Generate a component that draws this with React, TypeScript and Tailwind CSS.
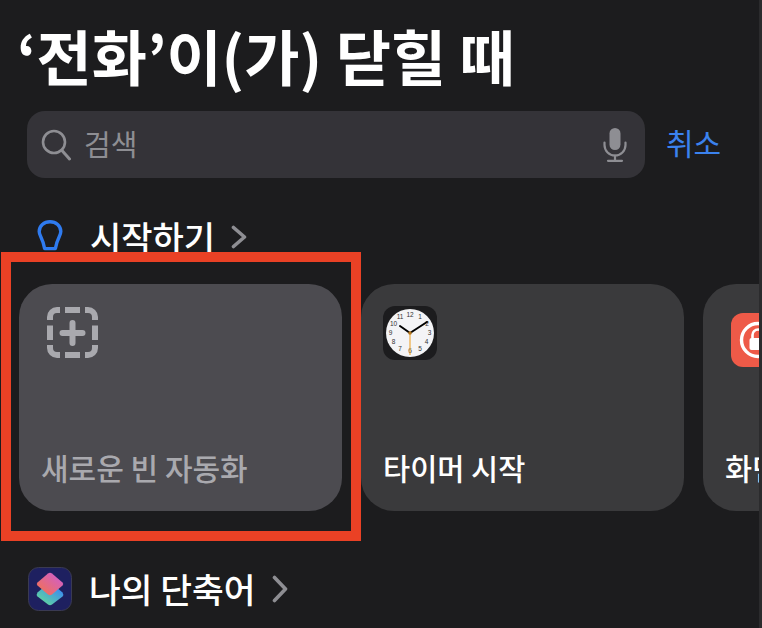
const fontStack = { fontFamily: '"Noto Sans CJK KR", "Noto Sans", sans-serif' };

function Chevron({ width, height }: { width: number; height: number }) {
  return (
    <svg width={width} height={height} viewBox={`0 0 ${width} ${height}`} fill="none" stroke="#8e8e93" strokeWidth="3.6" strokeLinecap="round" strokeLinejoin="round">
      <path d={`M2.5 2.5 L${width - 2.5} ${height / 2} L2.5 ${height - 2.5}`} />
    </svg>
  );
}

function SearchIcon() {
  return (
    <svg width="30" height="32" viewBox="0 0 30 32" fill="none" stroke="#8e8e93" strokeWidth="2.6" strokeLinecap="round">
      <circle cx="13" cy="13" r="11" />
      <path d="M21 21.5 L28.5 30" strokeWidth="3" />
    </svg>
  );
}

function MicIcon() {
  return (
    <svg width="24" height="34" viewBox="0 0 24 34" fill="none">
      <rect x="6.5" y="0" width="11" height="22" rx="5.5" fill="#8e8e93" />
      <path d="M1.5 14.5 V17 a10.5 10.5 0 0 0 21 0 V14.5" stroke="#8e8e93" strokeWidth="2.2" strokeLinecap="round" />
      <path d="M12 27.5 V32 M5 32.8 H19" stroke="#8e8e93" strokeWidth="2.2" strokeLinecap="round" />
    </svg>
  );
}

function BulbIcon() {
  return (
    <svg width="26" height="32" viewBox="0 0 26 32" fill="none" stroke="#2f7bf0" strokeWidth="3.4" strokeLinejoin="round">
      <path d="M13 1.8 C7 1.8 2.2 6 2.2 11.5 C2.2 16 6 18 7.6 28.6 H18.4 C20 18 23.8 16 23.8 11.5 C23.8 6 19 1.8 13 1.8 Z" />
    </svg>
  );
}

function BlankIcon() {
  return (
    <svg width="52" height="52" viewBox="0 0 52 52" fill="none" stroke="#a9a9ae" strokeWidth="6">
      <path d="M3 13 V10 a7 7 0 0 1 7 -7 H13" />
      <path d="M38 3 H41 a7 7 0 0 1 7 7 V13" />
      <path d="M48 38 V41 a7 7 0 0 1 -7 7 H38" />
      <path d="M13 48 H10 a7 7 0 0 1 -7 -7 V38" />
      <path d="M18 3 H33 M18 48 H33 M3 18.5 V33 M48 18.5 V33" />
      <path d="M25.5 16 V36 M15.5 26 H35.5" strokeWidth="6" strokeLinecap="round" />
    </svg>
  );
}

const clockNumbers = [
  ["12", 27, 10.5], ["1", 37, 13], ["2", 44, 19.5], ["3", 46.5, 29], ["4", 43.5, 38], ["5", 37, 44.5],
  ["6", 27, 47], ["7", 17, 44.5], ["8", 10.5, 38], ["9", 7.5, 29], ["10", 10.5, 19.5], ["11", 17, 13],
] as const;

function ClockIcon() {
  return (
    <svg width="54" height="54" viewBox="0 0 54 54">
      <rect width="54" height="54" rx="12" fill="#1c1c1e" />
      <circle cx="27" cy="27" r="24" fill="#f4f4f6" />
      {clockNumbers.map(([n, x, y]) => (
        <text key={n} x={x} y={y} fontSize="6.5" textAnchor="middle" fill="#333" style={{ fontFamily: '"Liberation Sans", sans-serif' }}>
          {n}
        </text>
      ))}
      <path d="M27 27 L17 20" stroke="#000" strokeWidth="2" strokeLinecap="round" />
      <path d="M27 27 L44 16" stroke="#000" strokeWidth="2" strokeLinecap="round" />
      <path d="M27 27 V49" stroke="#eda93e" strokeWidth="1.2" />
      <circle cx="27" cy="27" r="1.8" fill="#b5771f" />
    </svg>
  );
}

function LockIcon() {
  return (
    <svg width="54" height="54" viewBox="0 0 54 54" className="shrink-0">
      <rect width="54" height="54" rx="12" fill="#ee5a48" />
      <circle cx="27" cy="27" r="16.5" fill="none" stroke="#fff" strokeWidth="3.4" />
      <rect x="18.5" y="25" width="17" height="12" rx="2" fill="#fff" />
      <path d="M21.5 25 V22 a5.5 5.5 0 0 1 11 0 V25" fill="none" stroke="#fff" strokeWidth="2.6" />
    </svg>
  );
}

function ShortcutsIcon() {
  return (
    <svg width="44" height="44" viewBox="0 0 44 44">
      <defs>
        <linearGradient id="topDiamond" x1="0.1" y1="0.8" x2="0.8" y2="0.1">
          <stop offset="0" stopColor="#f0705a" />
          <stop offset="1" stopColor="#d25fc4" />
        </linearGradient>
        <linearGradient id="bottomDiamond" x1="0.2" y1="0.9" x2="0.8" y2="0.2">
          <stop offset="0" stopColor="#5fd3a0" />
          <stop offset="1" stopColor="#3c8cf0" />
        </linearGradient>
      </defs>
      <rect x="0.5" y="0.5" width="43" height="43" rx="10" fill="#1e2060" stroke="#3a3a52" />
      <path d="M20 16.5 Q22 15 24 16.5 L34.5 25.5 Q36 27.5 34.5 29.5 L24 37.5 Q22 39 20 37.5 L9.5 29.5 Q8 27.5 9.5 25.5 Z" fill="url(#bottomDiamond)" />
      <path d="M20 6.5 Q22 5 24 6.5 L34.5 15.5 Q36 17 34.5 18.5 L24 27.5 Q22 29 20 27.5 L9.5 18.5 Q8 17 9.5 15.5 Z" fill="url(#topDiamond)" />
    </svg>
  );
}

export default function App() {
  return (
    <div className="relative w-[762px] h-[628px] overflow-hidden bg-[#1c1c1e] text-white" style={fontStack}>
      <h1 className="pl-[17px] pt-[13px] h-[111px] text-[60px] leading-[84px] font-bold whitespace-nowrap">
        ‘전화’이(가) 닫힐 때
      </h1>

      <div className="flex items-center pl-[27px]">
        <div className="flex items-center w-[618px] h-[67px] rounded-[18px] bg-[#343338] pl-[14px] pr-[18px]">
          <SearchIcon />
          <span className="ml-[13px] text-[29px] leading-none text-[#8e8e93] -mt-[2px]">검색</span>
          <div className="ml-auto">
            <MicIcon />
          </div>
        </div>
        <span className="ml-[21px] text-[30px] leading-none text-[#3b82ee] -mt-[6px]">취소</span>
      </div>

      <div className="flex items-center h-[34px] mt-[41px] pl-[37px]">
        <BulbIcon />
        <span className="ml-[27px] mt-[2px] text-[34px] leading-none font-medium whitespace-nowrap">시작하기</span>
        <div className="ml-[16px] mt-[2px]">
          <Chevron width={16} height={24} />
        </div>
      </div>

      <div className="flex gap-[19px] mt-[31px] pl-[19px] w-[900px]">
        <div className="flex flex-col justify-between shrink-0 w-[323px] h-[227px] rounded-[33px] bg-[#4c4b50] pt-[23px] pl-[22px] pb-[24px]">
          <div className="pl-[6px]">
            <BlankIcon />
          </div>
          <span className="text-[30px] leading-[40px] font-medium text-[#a9a9ae] whitespace-nowrap">새로운 빈 자동화</span>
        </div>
        <div className="flex flex-col justify-between shrink-0 w-[323px] h-[227px] rounded-[33px] bg-[#3a3a3c] pt-[22px] pl-[22px] pb-[24px]">
          <ClockIcon />
          <span className="text-[29.5px] leading-[40px] font-medium whitespace-nowrap">타이머 시작</span>
        </div>
        <div className="flex flex-col justify-between shrink-0 w-[323px] h-[227px] rounded-[33px] bg-[#3a3a3c] pt-[29px] pl-[22px] pb-[24px]">
          <div className="pl-[6px]">
            <LockIcon />
          </div>
          <span className="text-[29.5px] leading-[40px] font-medium whitespace-nowrap">화면 잠금</span>
        </div>
      </div>

      <div className="flex items-center mt-[56px] pl-[28px]">
        <ShortcutsIcon />
        <span className="ml-[17px] -mt-[2px] text-[34.5px] leading-[44px] font-medium whitespace-nowrap">나의 단축어</span>
        <div className="ml-[17px]">
          <Chevron width={16} height={28} />
        </div>
      </div>

      {/* 빨간 강조 테두리 */}
      <div className="absolute left-[1px] top-[252px] w-[360px] h-[289px] border-[10px] border-[#ea4125]" />
      {/* 오른쪽 가장자리 띠 */}
      <div className="absolute right-0 top-0 w-[3px] h-full bg-[#2b2b2d]" />
    </div>
  );
}
